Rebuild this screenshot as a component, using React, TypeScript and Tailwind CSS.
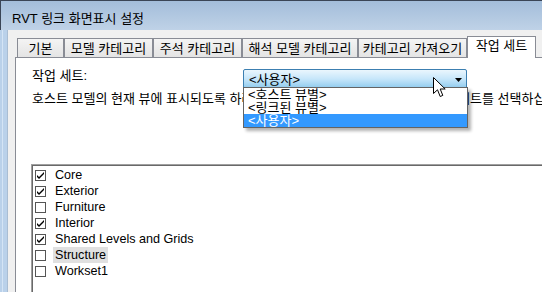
import React from "react";

const tabs = [
  { label: "기본", cls: "w-[47px]" },
  { label: "모델 카테고리", cls: "w-[89px]" },
  { label: "주석 카테고리", cls: "w-[89px]" },
  { label: "해석 모델 카테고리", cls: "w-[116px]" },
  { label: "카테고리 가져오기", cls: "w-[109px]" },
];

const rows = [
  { name: "Core", checked: true },
  { name: "Exterior", checked: true },
  { name: "Furniture", checked: false },
  { name: "Interior", checked: true },
  { name: "Shared Levels and Grids", checked: true },
  { name: "Structure", checked: false, hl: true },
  { name: "Workset1", checked: false },
];

function CheckBox({ checked }: { checked: boolean }) {
  return (
    <div className="w-[11px] h-[11px] border border-[#555555] bg-white shrink-0 flex items-center justify-center">
      {checked && (
        <svg width="9" height="9" viewBox="0 0 9 9">
          <path d="M1 4 L3 6 L8 1 L8 3 L3 8 L1 6 Z" fill="#000" />
        </svg>
      )}
    </div>
  );
}

export default function App() {
  return (
    <div className="w-[542px] h-[292px] overflow-hidden flex flex-col bg-[#f0f0f0] text-black font-['Liberation_Sans','Noto_Sans_CJK_KR',sans-serif]">
      {/* Title bar */}
      <div className="h-[30px] shrink-0 border-t border-l border-[#3a4556] bg-gradient-to-b from-[#a3bdda] to-[#bfd2e7] flex items-center pl-[11px] pt-[5px] text-[13px] leading-none">
        RVT 링크 화면표시 설정
      </div>
      <div className="flex flex-1 min-h-0">
        {/* left frame */}
        <div className="w-[8px] shrink-0 flex bg-[#bad1ea]">
          <div className="w-[2px]" />
          <div className="w-[1px] bg-[#d4e4f5]" />
          <div className="flex-1" />
          <div className="w-[1px] bg-[#a9bdd3]" />
        </div>
        {/* client */}
        <div className="flex-1 flex flex-col pl-[7px] pt-[6px] min-w-0">
          {/* tabs */}
          <div className="h-[21px] flex items-start pl-[2px] shrink-0">
            {tabs.map((t) => (
              <div
                key={t.label}
                className={`${t.cls} mt-[2px] h-[19px] shrink-0 border border-b-0 border-[#898c95] bg-gradient-to-b from-[#f4f4f4] to-[#e4e4e4] flex items-center justify-center text-[13px] leading-none whitespace-nowrap`}
              >
                {t.label}
              </div>
            ))}
            <div className="w-[69px] h-[22px] shrink-0 relative z-10 border border-b-0 border-[#898c95] bg-white flex justify-center pt-[1px] text-[13px] leading-[15px] whitespace-nowrap">
              작업 세트
            </div>
          </div>
          {/* panel */}
          <div className="flex-1 bg-white border-t border-l border-[#898c95] min-w-0">
            <div className="pl-[16px]">
              <div className="mt-[11px] h-[20px] flex items-start">
                <div className="w-[211px] shrink-0 text-[13px] leading-[14px] whitespace-nowrap">
                  작업 세트:
                </div>
                <div className="relative w-[224px] h-[20px] shrink-0 z-20">
                  <div className="w-full h-full rounded-[2px] border border-[#3c7fb1] bg-gradient-to-b from-[#eaf6fd] via-[#c6e6fa] to-[#8fcbee] flex items-center pl-[5px] text-[13px] leading-none">
                    &lt;사용자&gt;
                  </div>
                  <svg className="absolute left-[212px] top-[9px]" width="7" height="4" viewBox="0 0 7 4">
                    <path d="M0 0 H7 L3.5 4 Z" fill="#000" />
                  </svg>
                  <div className="absolute left-0 top-[18px] w-[225px] border border-[#646464] bg-white shadow-[3px_3px_3px_rgba(0,0,0,0.3)] text-[13px]">
                    <div className="h-[13px] leading-[13px] pl-[4px] overflow-hidden whitespace-nowrap">&lt;호스트 뷰별&gt;</div>
                    <div className="h-[13px] leading-[13px] pl-[4px] overflow-hidden whitespace-nowrap">&lt;링크된 뷰별&gt;</div>
                    <div className="h-[13px] leading-[13px] pl-[4px] overflow-hidden whitespace-nowrap bg-[#3399ff] text-white">&lt;사용자&gt;</div>
                  </div>
                  <svg className="absolute left-[190px] top-[8px] z-30" width="14" height="21" viewBox="0 0 14 21">
                    <path d="M0.5 0.5 L0.5 16.5 L4.5 12.8 L7.2 19.5 L9.8 18.4 L7.2 12 L12.2 12 Z" fill="#fff" stroke="#000" strokeWidth="1" strokeLinejoin="miter" />
                  </svg>
                </div>
              </div>
              <div className="mt-[2px] text-[13px] leading-[16px] whitespace-nowrap">
                호스트 모델의 현재 뷰에 표시되도록 하려면 링크된 모델의 사용할 수 있는 작업 세트를 선택하십시오.
              </div>
              {/* listbox */}
              <div className="mt-[57px] -ml-px border-t border-l border-[#a0a0a0]">
                <div className="border-t border-l border-[#696969] pt-[1px] pb-[40px]">
                  {rows.map((r) => (
                    <div key={r.name} className="h-[16px] flex items-center pl-[2px]">
                      <CheckBox checked={r.checked} />
                      <span
                        className={`ml-[7px] h-[16px] px-[2px] flex items-center text-[12.6px] leading-none whitespace-nowrap ${r.hl ? "bg-[#e0e0e0]" : ""}`}
                      >
                        {r.name}
                      </span>
                    </div>
                  ))}
                </div>
              </div>
            </div>
          </div>
        </div>
      </div>
    </div>
  );
}
